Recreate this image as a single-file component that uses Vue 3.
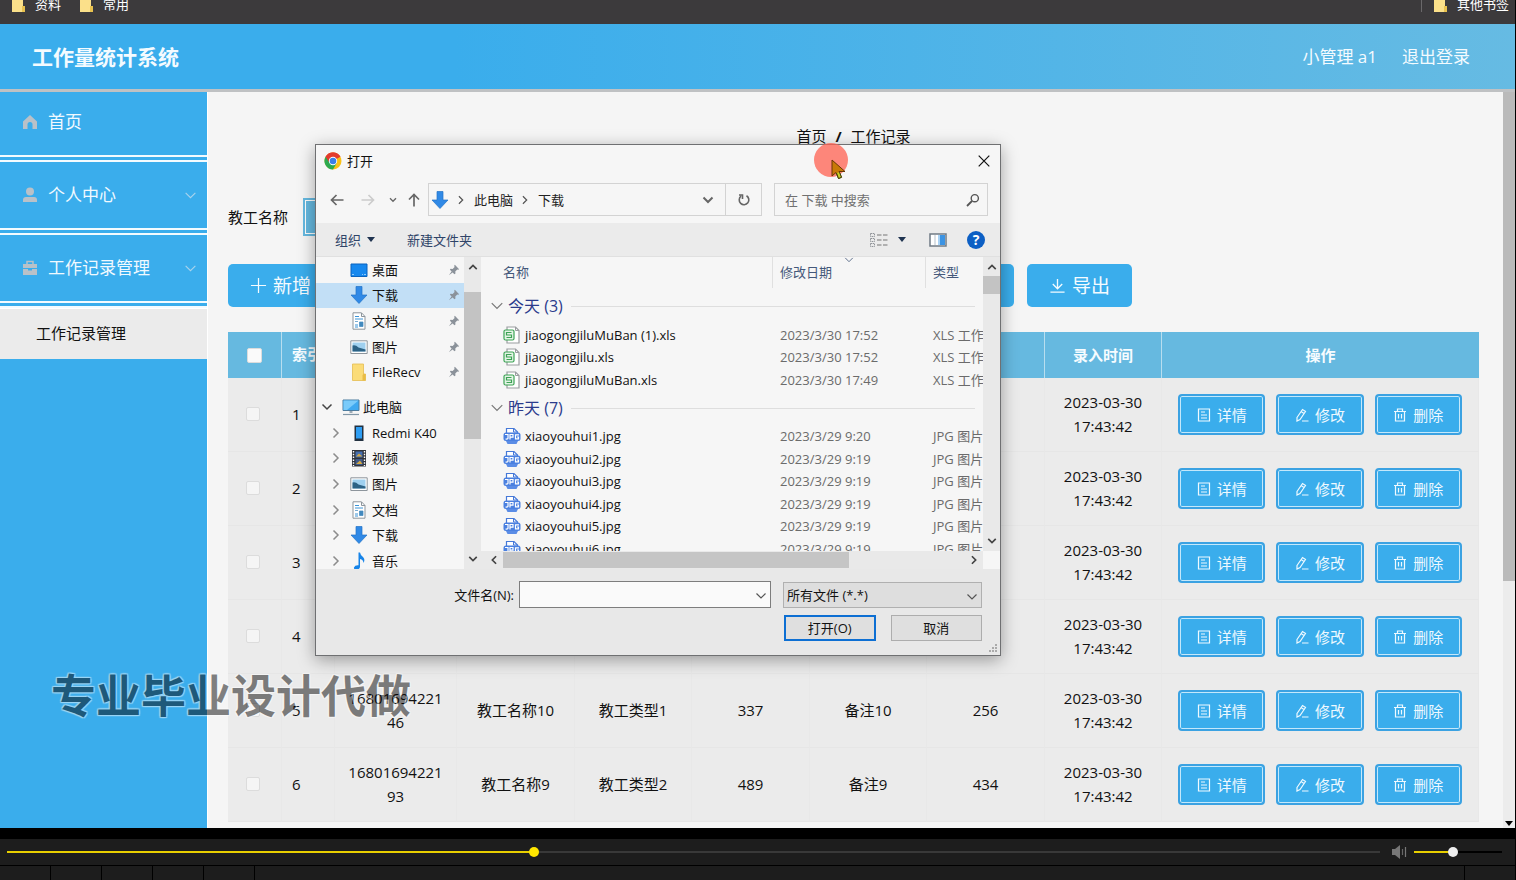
<script setup>
import { ref } from 'vue'

const progress = ref(38.3)
const volume = ref(43)
const fileName = ref('')

const menu = [
  { icon: 'home', label: '首页', more: false },
  { icon: 'user', label: '个人中心', more: true },
  { icon: 'case', label: '工作记录管理', more: true },
]

const blank = ['', '', '', '', '', '']
const rows = [
  { n: 1, cells: blank },
  { n: 2, cells: blank },
  { n: 3, cells: blank },
  { n: 4, cells: blank },
  { n: 5, cells: ['1680169422146', '教工名称10', '教工类型1', '337', '备注10', '256'] },
  { n: 6, cells: ['1680169422193', '教工名称9', '教工类型2', '489', '备注9', '434'] },
]
const heads = ['', '', '', '', '', '', '录入时间']
const actions = [
  { icon: 'doc', label: '详情' },
  { icon: 'edit', label: '修改' },
  { icon: 'trash', label: '删除' },
]

const quick = [
  { icon: 'desktop', label: '桌面' },
  { icon: 'down', label: '下载', on: true },
  { icon: 'text', label: '文档' },
  { icon: 'image', label: '图片' },
  { icon: 'folder', label: 'FileRecv' },
]
const tree = [
  { icon: 'pc', label: '此电脑', root: true },
  { icon: 'phone', label: 'Redmi K40' },
  { icon: 'film', label: '视频' },
  { icon: 'image', label: '图片' },
  { icon: 'text', label: '文档' },
  { icon: 'down', label: '下载' },
  { icon: 'music', label: '音乐' },
]
const groups = [
  {
    title: '今天 (3)', cls: 'today', icon: 'xls', type: 'XLS 工作表',
    files: [
      ['jiaogongjiluMuBan (1).xls', '2023/3/30 17:52'],
      ['jiaogongjilu.xls', '2023/3/30 17:52'],
      ['jiaogongjiluMuBan.xls', '2023/3/30 17:49'],
    ],
  },
  {
    title: '昨天 (7)', cls: 'yesterday', icon: 'jpg', type: 'JPG 图片',
    files: [
      ['xiaoyouhui1.jpg', '2023/3/29 9:20'],
      ['xiaoyouhui2.jpg', '2023/3/29 9:19'],
      ['xiaoyouhui3.jpg', '2023/3/29 9:19'],
      ['xiaoyouhui4.jpg', '2023/3/29 9:19'],
      ['xiaoyouhui5.jpg', '2023/3/29 9:19'],
      ['xiaoyouhui6.jpg', '2023/3/29 9:19'],
    ],
  },
]
</script>

<template>
  <div class="screen">
    <svg class="defs" aria-hidden="true">
      <symbol id="i-bookmark" viewBox="0 0 14 14"><path d="M0 0h11v8h2v6H0z" fill="#fbe08a" /><path d="M10 8h3v6h-3z" fill="#e9c24f" /></symbol>
      <symbol id="i-home" viewBox="0 0 16 16"><path d="M8 1 1 7.500V15h4.500v-4.500a2.500 2.500 0 0 1 5 0V15H15V7.500z" fill="currentColor" /></symbol>
      <symbol id="i-user" viewBox="0 0 16 16"><circle cx="8" cy="4.500" r="4" fill="currentColor" /><path d="M1 15v-2q0-3 3-3h8q3 0 3 3v2z" fill="currentColor" /></symbol>
      <symbol id="i-case" viewBox="0 0 16 16"><path d="M5 4V1.500h6V4" fill="none" stroke="currentColor" stroke-width="1.500" /><path d="M1 4h14v4H1zM1 9h5v1.500h4V9h5v6H1z" fill="currentColor" /></symbol>
      <symbol id="i-chev" viewBox="0 0 12 12"><path d="m1.500 3.500 4.500 4.500 4.500-4.500" fill="none" stroke="currentColor" stroke-width="var(--w, 1)" /></symbol>
      <symbol id="i-plus" viewBox="0 0 18 18"><path d="M9 1v16M1 9h16" stroke="currentColor" stroke-width="1.300" /></symbol>
      <symbol id="i-export" viewBox="0 0 18 18"><path d="M9 2v10M4 7.500l5 5 5-5M1.500 16h15" fill="none" stroke="currentColor" stroke-width="1.400" /></symbol>
      <symbol id="i-doc" viewBox="0 0 14 14"><path d="M1.500 1h11v12h-11zM4 4h4M4 7h6M4 10h6" fill="none" stroke="currentColor" stroke-width="1.200" /></symbol>
      <symbol id="i-edit" viewBox="0 0 14 14"><path d="M2 9.500 7.500 1.500l3 2L5 11.500 2 13zM6 3.500l3 2M7 13h6.500" fill="none" stroke="currentColor" stroke-width="1.200" /></symbol>
      <symbol id="i-trash" viewBox="0 0 14 14"><path d="M1 3.500h12M4.500 3.500V1h5v2.500M2.500 3.500V13h9V3.500M5.500 6v4.500M8.500 6v4.500" fill="none" stroke="currentColor" stroke-width="1.200" /></symbol>
      <symbol id="i-chrome" viewBox="0 0 18 18"><circle cx="9" cy="9" r="8.500" fill="#fbc116" /><path d="M9 9 1.600 4.750A8.500 8.500 0 0 1 16.400 4.750z" fill="#e33b2e" /><path d="M9 9 1.600 4.750A8.500 8.500 0 0 0 9 17.500l3.500-6z" fill="#2da94f" /><path d="M9 5h7.500A8.500 8.500 0 0 0 1.600 4.750L5 10z" fill="#e33b2e" /><circle cx="9" cy="9" r="4.200" fill="#fff" /><circle cx="9" cy="9" r="3.300" fill="#3b7fe8" /></symbol>
      <symbol id="i-back" viewBox="0 0 14 14"><path d="M13.500 7H1.500M6.500 2 1.500 7l5 5" fill="none" stroke="currentColor" stroke-width="1.700" /></symbol>
      <symbol id="i-down" viewBox="0 0 18 18"><path d="M6 .5h6V9h5l-8 8.500L1 9h5z" fill="#3089e6" stroke="#2272c6" stroke-width=".7" /></symbol>
      <symbol id="i-reload" viewBox="0 0 14 14"><path d="M4 3.200A4.800 4.800 0 1 0 9.500 2.800M2 2h3.500v4" fill="none" stroke="currentColor" stroke-width="1.600" /></symbol>
      <symbol id="i-search" viewBox="0 0 14 14"><path d="M6 8 1 13" stroke="currentColor" stroke-width="1.800" /><circle cx="8.800" cy="5.200" r="3.600" fill="none" stroke="currentColor" stroke-width="1.400" /></symbol>
      <symbol id="i-view" viewBox="0 0 18 16"><path d="M.5 1.500h4v3h-4zM.5 6.500h4v3h-4zM.5 11.500h4v3h-4z" fill="none" stroke="#909499" stroke-dasharray="1.500 .6" /><path d="M7 3h4.500M13 3h4.500M7 8h4.500M13 8h4.500M7 13h4.500M13 13h4.500" stroke="#777" stroke-width="1.200" /></symbol>
      <symbol id="i-pane" viewBox="0 0 18 14"><path d="M1 1h16v12H1z" fill="#fff" stroke="#707b85" stroke-width="1.500" /><path d="M6 2v10" stroke="#b7c2cc" /><path d="M10 2h6v10h-6z" fill="#3b93e3" /><path d="M9 2h2v10H9z" fill="#a8d2f5" /></symbol>
      <symbol id="i-pin" viewBox="0 0 14 14"><path d="m8 1 5 5-1.200.8-1-.3-2.300 2.300.2 2.400-1.200.8L2.200 6.800l.8-1.200 2.400.2L7.700 3.500 7.200 2zM4.200 8.800l1.200 1.200L1 13.200z" fill="#8b929a" /></symbol>
      <symbol id="i-desktop" viewBox="0 0 18 18"><path d="M1 3h16v12.500H1z" fill="#1688ee" stroke="#0b63bd" /><path d="M2 13.500h14" stroke="#8cc9fb" stroke-dasharray="2 8 1 1" /></symbol>
      <symbol id="i-text" viewBox="0 0 18 18"><path d="M3 .8h8.500L15 4.500v12.700H3z" fill="#fff" stroke="#8d959c" /><path d="M11.500 1v3.500H15" fill="none" stroke="#8d959c" /><path d="M5 4.500h4M5 7h8M5 13h3M5 15h3" stroke="#3c94d6" /><path d="M5 9.500h3M9.500 10h3.500v4.500H9.500z" fill="#4289be" stroke="#4289be" stroke-width=".7" /></symbol>
      <symbol id="i-image" viewBox="0 0 18 18"><path d="M.8 2.800h16.400v12.700H.8z" fill="#fff" stroke="#8d959c" /><path d="M2.500 4.500h13v9h-13z" fill="#9fd0ef" /><path d="M2.500 7.500q3-1 6 2l7 2v2h-13z" fill="#2c6285" /></symbol>
      <symbol id="i-folder" viewBox="0 0 18 18"><path d="M2.500 1h11v10h2v6.500h-13z" fill="#fbdc78" stroke="#e4bd52" stroke-width=".8" /><path d="M13.500 11h2v6.500h-3V12z" fill="#e9bc45" /></symbol>
      <symbol id="i-pc" viewBox="0 0 18 18"><path d="M1 2h16v10.500H1z" fill="#3fa9f0" stroke="#4d7c9f" /><path d="M1.500 2.500h15L5 12H1.500z" fill="#7acbfa" /><path d="M7.500 13h3v2h-3z" fill="#9eabb5" /><path d="M1 16.500h16" stroke="#8298a8" stroke-width="1.200" /></symbol>
      <symbol id="i-phone" viewBox="0 0 18 18"><path d="M4.500 1.500h9v15.500h-9z" fill="#223140" /><path d="M6 3h6v11.500H6z" fill="#2e9df2" /></symbol>
      <symbol id="i-film" viewBox="0 0 18 18"><path d="M2 1h14v16.500H2z" fill="#30343b" /><path d="M3.500 2v15M14.500 2v15" stroke="#fff" stroke-width="1.400" stroke-dasharray="1.500 1.300" /><path d="M5.500 2.500h7v6h-7z" fill="#456fb0" /><path d="M5.500 10h7v6h-7z" fill="#3f5a8c" /><path d="m6 7.500 3-3 3.500 3zM6 15l4-3.500 2.500 3.500z" fill="#d3a842" /></symbol>
      <symbol id="i-music" viewBox="0 0 18 18"><path d="M8.500.5H10q.5 3 3 4.500 2.500 2.500.5 6-.2-3.500-3.500-4V15q-.5 2.500-3.500 2.500-3 0-2.500-2 .8-2.500 4.500-2.200z" fill="#1784e8" /></symbol>
      <symbol id="i-xls" viewBox="0 0 18 18"><path d="M4 4V1h8.500L16 4.500V17H4v-3" fill="#fff" stroke="#9a9da0" stroke-width="1.200" /><path d="M12.500 1v3.500H16" fill="none" stroke="#9a9da0" /><rect x="1" y="4" width="10" height="10" rx="1.500" fill="#e4f4e6" stroke="#3da355" stroke-width="1.200" /><path d="M8.500 6.500h-5V9h5v2.500h-5" fill="none" stroke="#3da355" stroke-width="1.200" /></symbol>
      <symbol id="i-jpg" viewBox="0 0 18 18"><path d="M3.500 6V1.500H11L14.500 5v1" fill="#fff" stroke="#4679d8" stroke-width="1.200" /><path d="M10.500 1.500V5h4" fill="none" stroke="#4679d8" /><rect x=".5" y="5.500" width="17" height="8.500" rx="2.500" fill="#4a80e0" /><path d="M3 14h12l-1.500 3h-9z" fill="#5a8ce6" /><path d="M2 7.500h3v3.700q0 1-2.500.8M7 12.500v-5h3v2.600H7M16 7.800h-3.500v4h3V10H14" fill="none" stroke="#fff" stroke-width="1.200" /></symbol>
      <symbol id="i-close" viewBox="0 0 12 12"><path d="m.7.7 10.600 10.600M11.300.7.700 11.300" stroke="currentColor" stroke-width="1.200" /></symbol>
      <symbol id="i-speaker" viewBox="0 0 16 14"><path d="M0 4h3l5-4v14l-5-4H0z" fill="#777" /><path d="M10.500 4v6" stroke="#666" stroke-width="1.200" /><path d="M13.500 2v10" stroke="#777" stroke-width="1.200" /></symbol>
    </svg>

    <div class="stage">
      <nav class="bookmarks" aria-label="书签">
        <a href="#"><svg><use href="#i-bookmark" /></svg>资料</a>
        <a href="#"><svg><use href="#i-bookmark" /></svg>常用</a>
        <a href="#" class="other"><svg><use href="#i-bookmark" /></svg>其他书签</a>
      </nav>

      <header class="top">
        <h1>工作量统计系统</h1>
        <span>小管理 a1</span>
        <a href="#">退出登录</a>
      </header>

      <div class="body">
        <aside class="side">
          <ul>
            <li v-for="m in menu" :key="m.label">
              <a href="#">
                <svg class="mi"><use :href="'#i-' + m.icon" /></svg>
                <span>{{ m.label }}</span>
                <svg v-if="m.more" class="more"><use href="#i-chev" /></svg>
              </a>
            </li>
          </ul>
          <a href="#" class="sub">工作记录管理</a>
        </aside>

        <main class="main">
          <nav class="crumbs"><a href="#">首页</a><b>/</b><span>工作记录</span></nav>
          <div class="filter">
            <label for="teacher">教工名称</label>
            <input id="teacher" type="text" />
          </div>
          <div class="tools">
            <button><svg><use href="#i-plus" /></svg>新增</button>
            <button class="wide" aria-label="下载"></button>
            <button><svg><use href="#i-export" /></svg>导出</button>
          </div>
          <table>
            <colgroup>
              <col class="c-check" /><col class="c-no" /><col class="c-id" />
              <col v-for="i in 6" :key="i" :class="i % 2 ? 'c-data' : 'c-alt'" /><col />
            </colgroup>
            <thead>
              <tr>
                <th><input type="checkbox" aria-label="全选" /></th>
                <th class="no">索引</th>
                <th v-for="(h, i) in heads" :key="i">{{ h }}</th>
                <th>操作</th>
              </tr>
            </thead>
            <tbody>
              <tr v-for="r in rows" :key="r.n">
                <td class="check"><input type="checkbox" :aria-label="'选择 ' + r.n" /></td>
                <td class="no">{{ r.n }}</td>
                <td v-for="(c, i) in r.cells" :key="i">{{ c }}</td>
                <td>2023-03-30 17:43:42</td>
                <td>
                  <div class="acts">
                    <button v-for="a in actions" :key="a.label"><svg><use :href="'#i-' + a.icon" /></svg>{{ a.label }}</button>
                  </div>
                </td>
              </tr>
            </tbody>
          </table>
        </main>
        <div class="pagebar"><i></i><svg viewBox="0 0 8 5"><path d="M0 0h8L4 5z" /></svg></div>
      </div>

      <section class="dialog" role="dialog" aria-label="打开">
        <div class="title">
          <svg class="s18"><use href="#i-chrome" /></svg>
          <span>打开</span>
          <button aria-label="关闭"><svg class="s12"><use href="#i-close" /></svg></button>
        </div>
        <div class="nav">
          <div class="arrows">
            <svg class="s14"><use href="#i-back" /></svg>
            <svg class="s14 fwd"><use href="#i-back" /></svg>
            <svg class="s8"><use href="#i-chev" /></svg>
            <svg class="s14 up"><use href="#i-back" /></svg>
          </div>
          <div class="address">
            <svg class="s18"><use href="#i-down" /></svg>
            <svg class="s10 right"><use href="#i-chev" /></svg>
            <span>此电脑</span>
            <svg class="s10 right"><use href="#i-chev" /></svg>
            <span>下载</span>
            <svg class="s12 drop"><use href="#i-chev" /></svg>
            <button aria-label="刷新"><svg class="s14"><use href="#i-reload" /></svg></button>
          </div>
          <div class="search">
            <input type="text" placeholder="在 下载 中搜索" aria-label="搜索" />
            <svg class="s14"><use href="#i-search" /></svg>
          </div>
        </div>
        <div class="bar">
          <button>组织<i class="caret"></i></button>
          <button>新建文件夹</button>
          <div class="views">
            <svg class="v"><use href="#i-view" /></svg><i class="caret"></i>
            <svg class="p"><use href="#i-pane" /></svg>
            <b>?</b>
          </div>
        </div>
        <div class="panes">
          <div class="places">
            <ul class="quick">
              <li v-for="q in quick" :key="q.label" :class="{ on: q.on }">
                <svg class="s18"><use :href="'#i-' + q.icon" /></svg><span>{{ q.label }}</span>
                <svg class="pin"><use href="#i-pin" /></svg>
              </li>
            </ul>
            <ul class="tree">
              <li v-for="t in tree" :key="t.label" :class="{ root: t.root }">
                <svg class="tw s12" :class="{ right: !t.root }"><use href="#i-chev" /></svg>
                <svg class="s18"><use :href="'#i-' + t.icon" /></svg><span>{{ t.label }}</span>
              </li>
            </ul>
          </div>
          <div class="vbar tall"><svg class="s10 flip"><use href="#i-chev" /></svg><i></i><svg class="s10 last"><use href="#i-chev" /></svg></div>
          <div class="files">
            <div class="cols">
              <span>名称</span><span>修改日期<svg class="sort"><use href="#i-chev" /></svg></span><span>类型</span>
            </div>
            <div v-for="g in groups" :key="g.title">
              <h3 :class="g.cls"><svg class="s14"><use href="#i-chev" /></svg>{{ g.title }}</h3>
              <ul :class="g.cls">
                <li v-for="f in g.files" :key="f[0]">
                  <span class="nm"><svg class="s18"><use :href="'#i-' + g.icon" /></svg>{{ f[0] }}</span>
                  <span>{{ f[1] }}</span><span>{{ g.type }}</span>
                </li>
              </ul>
            </div>
          </div>
          <div class="vbar short"><svg class="s10 flip"><use href="#i-chev" /></svg><i></i><svg class="s10 last"><use href="#i-chev" /></svg></div>
          <div class="hbar"><svg class="s10 left"><use href="#i-chev" /></svg><i></i><svg class="s10 right last"><use href="#i-chev" /></svg></div>
        </div>
        <form class="foot" @submit.prevent>
          <label for="fname">文件名(N):</label>
          <div class="combo"><input id="fname" v-model="fileName" type="text" /><svg class="s12"><use href="#i-chev" /></svg></div>
          <div class="combo kind">
            <select aria-label="文件类型"><option>所有文件 (*.*)</option></select><svg class="s12"><use href="#i-chev" /></svg>
          </div>
          <div class="okrow">
            <button class="ok">打开(O)</button>
            <button type="button">取消</button>
          </div>
          <svg class="grip" viewBox="0 0 10 10"><path d="M7 1h2M7 4h2M4 4h2M7 7h2M4 7h2M1 7h2" stroke="#aaa" stroke-width="2" /></svg>
        </form>
      </section>

      <div class="spot">
        <svg viewBox="0 0 16 22"><path d="M1 1v16l4-3.500 2.500 6 3-1.200L8 12.500h6z" fill="#c87908" stroke="#6b3505" /><path d="m5.500 14 2 5.500 3-1.200-2-5" fill="#c6cf25" stroke="#3b3f08" /></svg>
      </div>
      <div class="mark">专业毕业设计代做</div>
    </div>

    <footer class="player">
      <div class="controls">
        <input v-model="progress" class="seek" type="range" min="0" max="100" step="0.1" aria-label="进度" :style="{ '--at': progress + '%' }" />
        <svg class="spk"><use href="#i-speaker" /></svg>
        <input v-model="volume" class="vol" type="range" min="0" max="100" aria-label="音量" :style="{ '--at': volume + '%' }" />
      </div>
      <div class="cells"><i v-for="n in 5" :key="n"></i><i class="end"></i></div>
    </footer>
  </div>
</template>

<style>
body { background: #000; }
</style>

<style scoped>
* { box-sizing: border-box; }
.screen { height: 100vh; display: flex; flex-direction: column; overflow: hidden; background: #000; font: 15px/24px "Open Sans", "Noto Sans CJK SC", sans-serif; color: #111; }
.defs { position: absolute; width: 0; height: 0; }
svg { flex: none; display: block; }
a { color: inherit; text-decoration: none; }
ul, h1, h3 { margin: 0; padding: 0; list-style: none; }
button, input, select { font: inherit; color: inherit; margin: 0; padding: 0; border: 0; background: none; border-radius: 0; }
.s8 { width: 8px; height: 8px; } .s10 { width: 10px; height: 10px; } .s12 { width: 12px; height: 12px; }
.s14 { width: 14px; height: 14px; } .s18 { width: 18px; height: 18px; }
.right { transform: rotate(-90deg); } .left { transform: rotate(90deg); } .flip { transform: rotate(180deg); }

.stage { flex: 1; min-height: 0; position: relative; overflow: hidden; display: flex; flex-direction: column; margin-right: 1px; background: #f5f5f5; }
.bookmarks { flex: none; height: 24px; padding: 0 6px 0 12px; display: flex; gap: 19px; background: #3c3a3c; color: #fff; font-size: 13px; line-height: 8px; }
.bookmarks a { display: flex; gap: 9px; height: 12px; }
.bookmarks svg { width: 14px; height: 14px; margin-top: -2px; }
.bookmarks .other { margin-left: auto; padding-left: 12px; border-left: 1px solid #6a686a; }

.top { flex: none; height: 68px; display: flex; align-items: center; gap: 25px; padding: 1px 45px 0 32px; border-bottom: 3px solid #bfc1c3; background: linear-gradient(90deg, #3aadec 30%, #66bbe3); color: #f4fbff; font-size: 17px; }
.top h1 { margin-right: auto; font-size: 21px; font-weight: 700; line-height: 28px; }

.body { flex: 1; min-height: 0; display: flex; }
.side { flex: none; width: 207px; background: #3aadec; }
.side li { height: 73px; border-bottom: 7px double #f3fbff; color: #f0f9ff; font-size: 17px; }
.side li:first-child { height: 70px; padding-bottom: 3px; }
.side li a { height: 100%; display: flex; align-items: center; padding: 0 10px 0 22px; }
.mi { width: 16px; height: 16px; margin-right: 10px; color: #b9c1c8; }
.more { width: 13px; height: 13px; margin-left: auto; color: #a9d3ec; }
.sub { display: block; padding: 12px 36px 14px; border-top: 1px solid #fff; background: #ebebeb; }

.main { flex: 1; min-width: 0; padding: 32px 24px 0 20px; background: #f5f5f5; border-left: 1px solid #fff; overflow: hidden; }
.crumbs { display: flex; justify-content: center; gap: 9px; }
.filter { display: flex; align-items: center; margin-top: 50px; gap: 15px; height: 38px; }
.filter input { width: 190px; height: 38px; border: 2px solid #66b9e0; background: #66b9e0; box-shadow: inset 0 0 0 1px #fff; }
.tools { display: flex; gap: 13px; margin-top: 28px; }
.tools button { width: 105px; height: 43px; border-radius: 5px; background: #3aadec; color: #f4fbff; font-size: 19px; display: flex; align-items: center; justify-content: center; gap: 6px; }
.tools .wide { width: 668px; }
.tools svg { width: 17px; height: 17px; }

table { width: 100%; margin-top: 25px; table-layout: fixed; border-collapse: separate; border-spacing: 0; background: #ebebeb; }
.c-check { width: 54px; } .c-no { width: 53px; } .c-id { width: 122px; } .c-data { width: 118px; } .c-alt { width: 117px; }
th { height: 46px; padding: 0; background: #66b9e0; color: #f6fcff; font-weight: 700; border-right: 1px solid #b8deef; }
th:last-child { border-right: 0; }
td { height: 74px; padding: 0 10px 2px; text-align: center; word-break: break-word; border-right: 1px solid #e8e8e8; border-bottom: 1px solid #e6e6e6; }
td:last-child { padding: 0 16px; }
.no { text-align: left; padding: 0 0 2px 10px; overflow: hidden; white-space: nowrap; }
.check { text-align: left; padding-left: 18px; }
table input { appearance: none; display: block; width: 14px; height: 14px; border: 1px solid #dcdcdc; border-radius: 2px; background: #f5f5f5; }
th input { width: 15px; height: 15px; margin: 0 auto; background: #fafafa; }
.acts { display: flex; gap: 11px; }
.acts button { width: 88px; height: 41px; border: 2px solid #3ba2e2; border-radius: 4px; background: #3aadec; box-shadow: inset 0 0 0 1px #c4e8fb; color: #eef9ff; display: flex; align-items: center; justify-content: center; gap: 6px; }
.acts svg { width: 14px; height: 14px; }
.pagebar { flex: none; width: 12px; background: #ececec; display: flex; flex-direction: column; justify-content: space-between; align-items: center; padding-bottom: 2px; }
.pagebar i { width: 100%; height: 489px; background: #bababa; }
.pagebar svg { width: 8px; height: 5px; }

.dialog { position: absolute; left: 315px; top: 144px; width: 686px; border: 1px solid #6f7072; background: #f6f6f6; box-shadow: 0 4px 16px rgba(0, 0, 0, .35); font-size: 13px; line-height: 18px; display: flex; flex-direction: column; }
.title { height: 31px; display: flex; align-items: center; gap: 5px; padding: 0 10px 0 8px; }
.title button { margin-left: auto; }
.nav { display: flex; height: 47px; padding: 7px 12px 7px 14px; color: #555; }
.arrows { width: 98px; display: flex; align-items: center; color: #666; --w: 2; }
.fwd { transform: rotate(180deg); margin-left: 17px; color: #ccc; }
.arrows .s8 { margin-left: 14px; }
.up { transform: rotate(90deg); margin-left: 10px; }
.address, .search { display: flex; align-items: center; border: 1px solid #d3d3d3; --w: 1.500; }
.address { width: 334px; padding-left: 2px; color: #222; }
.address .right { margin: 0 8px 0 7px; color: #555; }
.address .drop { margin-left: auto; color: #666; --w: 2; }
.address button { width: 36px; height: 31px; margin-left: 11px; border-left: 1px solid #d3d3d3; display: grid; place-items: center; color: #666; }
.search { flex: 1; margin-left: 12px; padding: 0 7px 0 10px; }
.search input { flex: 1; min-width: 0; outline: 0; }
.search input::placeholder { color: #707070; opacity: 1; }
.bar { height: 34px; display: flex; align-items: center; gap: 32px; padding: 0 15px 0 19px; background: #ebebeb; border-bottom: 1px solid #e0e0e0; color: #2f4468; }
.caret { display: inline-block; border: 4px solid transparent; border-top: 5px solid #1f3350; border-bottom: 0; }
.bar button { display: flex; align-items: center; gap: 6px; }
.views { margin-left: auto; display: flex; align-items: center; }
.v { width: 18px; height: 16px; margin-right: 10px; }
.p { width: 18px; height: 14px; margin: 0 20px 0 23px; }
.views b { width: 18px; height: 18px; border-radius: 50%; background: #0c5fc4; color: #fff; text-align: center; font-size: 14px; }

.panes { height: 312px; display: grid; grid-template: 294px 18px / 148px 17px 3px 1fr 17px; background: #f6f6f6; }
.places { grid-row: 1 / 3; overflow: hidden; }
.quick { height: 128px; display: grid; grid-auto-rows: 1fr; }
.tree { height: 180px; display: grid; grid-auto-rows: 1fr; margin-top: 9px; }
.places li { display: flex; align-items: center; gap: 4px; }
.quick li { padding: 0 4px 0 34px; }
.quick .on { background: #c2dff6; }
.pin { width: 12px; height: 12px; margin-left: auto; }
.tree li { padding-left: 14px; color: #111; }
.tree .root { padding-left: 5px; gap: 3px; }
.tw { color: #8c8c8c; margin-right: 4px; --w: 1.500; }
.root .tw { color: #444; margin-right: 6px; }
.vbar { display: flex; flex-direction: column; align-items: center; background: #e9e9e9; color: #444; padding: 5px 0; --w: 2; }
.vbar i { width: 100%; background: #c3c3c3; }
.vbar .last, .hbar .last { margin-top: auto; }
.tall { grid-row: 1 / 3; } .tall i { height: 147px; margin-top: 20px; }
.short i { height: 18px; margin-top: 4px; }
.files { grid-column: 4; min-width: 0; overflow: hidden; }
.cols, .files li { display: grid; grid-template-columns: 288px 153px 1fr; align-items: center; white-space: nowrap; }
.cols { height: 31px; color: #44587a; }
.cols span { position: relative; height: 31px; line-height: 30px; padding-left: 7px; border-left: 1px solid #e0e0e0; }
.cols span:first-child { padding-left: 19px; border: 0; }
.sort { position: absolute; left: 71px; top: -2px; width: 10px; height: 10px; }
h3 { display: flex; align-items: center; gap: 4px; padding: 0 8px 0 6px; font-size: 16px; font-weight: 400; color: #2b3b8c; }
h3::after { content: ""; flex: 1; height: 1px; margin-left: 4px; background: #dedede; }
h3 svg { color: #777; }
h3.today { height: 36px; } h3.yesterday { height: 34px; }
.files ul { display: grid; grid-auto-rows: 1fr; }
ul.today { height: 67px; } ul.yesterday { height: 135px; }
.files li span { padding-left: 8px; color: #6b6b6b; }
.files li .nm { display: flex; align-items: center; gap: 4px; padding-left: 19px; color: #111; }
.hbar { grid-column: 3 / 5; display: flex; align-items: center; padding: 0 4px 0 8px; background: #e9e9e9; color: #444; --w: 2; }
.hbar i { width: 346px; height: 16px; margin-left: 4px; background: #c5c5c5; }
.hbar .last { margin: 0 0 0 auto; }

.foot { position: relative; display: grid; grid-template-columns: 198px 257px 211px; align-items: center; padding: 12px 0 14px; background: #e8e8e8; }
.foot label { text-align: right; }
.combo { display: flex; align-items: center; position: relative; height: 27px; margin-left: 5px; border: 1px solid #7d7d7d; background: #fafafa; }
.combo input { flex: 1; min-width: 0; height: 25px; outline: 0; padding: 0 4px; }
.combo svg { position: absolute; right: 3px; top: 8px; pointer-events: none; color: #555; --w: 1.200; }
.combo.kind { height: 26px; margin-left: 12px; border-color: #b0b0b0; background: #dedede; }
.kind select { appearance: none; width: 100%; height: 24px; padding-left: 3px; outline: 0; }
.okrow { grid-column: 3; display: flex; gap: 15px; margin: 7px 0 0 13px; }
.okrow button { width: 92px; height: 26px; border: 1px solid #adadad; background: #dfdfdf; }
.okrow .ok { border: 2px solid #0d6fd3; }
.grip { position: absolute; right: 2px; bottom: 1px; width: 10px; height: 10px; }

.spot { position: absolute; left: 814px; top: 143px; width: 34px; height: 34px; border-radius: 50%; background: rgba(255, 96, 80, .75); }
.spot svg { position: absolute; left: 17px; top: 16px; width: 16px; height: 22px; }
.mark { position: absolute; left: 51px; top: 664px; font-size: 45px; line-height: 64px; font-weight: 700; color: #000; opacity: .48; pointer-events: none; white-space: nowrap; text-shadow: 1px 1px 1px #fff, -1px -1px 1px #fff, 1px -1px 1px #fff, -1px 1px 1px #fff, 0 0 2px #fff; }

.player { flex: none; padding: 11px 1px 0 0; background: #000; }
.controls { height: 26px; display: flex; align-items: center; padding: 0 13px 0 7px; background: #1d1d1d; }
.player input { appearance: none; display: block; height: 10px; outline: 0; --rest: #393939; background: linear-gradient(90deg, #e8cf00 var(--at), var(--rest) var(--at)) center / 100% 2px no-repeat; }
.seek { flex: 1; min-width: 0; }
.player .vol { width: 88px; --rest: #000; }
.player input::-webkit-slider-thumb { appearance: none; width: 10px; height: 10px; border-radius: 50%; background: #ffe600; }
.player .vol::-webkit-slider-thumb { background: #eee; }
.spk { width: 16px; height: 14px; margin: 0 6px 0 12px; }
.cells { display: flex; height: 15px; border-top: 1px solid #000; background: #1d1d1d; }
.cells i { width: 51px; border-right: 1px solid #000; }
.cells .end { margin-left: auto; border-right: 0; border-left: 1px solid #000; }
</style>
